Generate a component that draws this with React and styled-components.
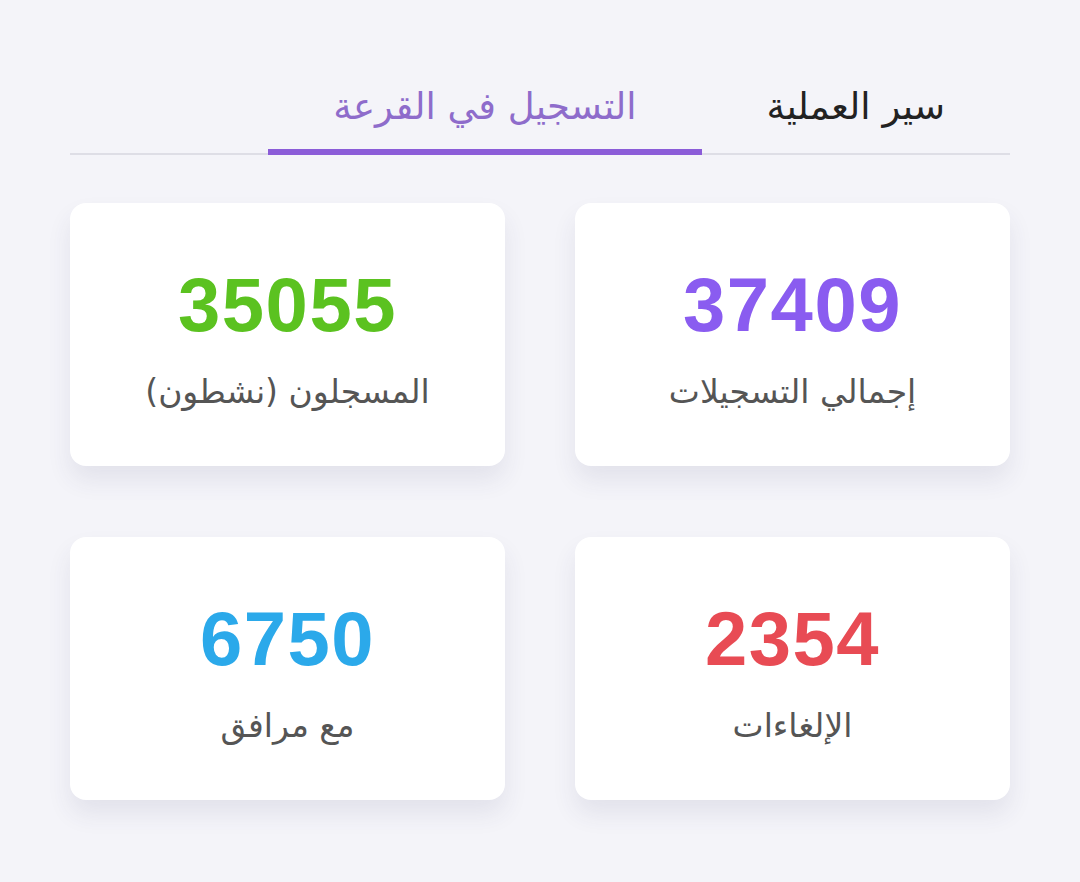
import React, { useState } from 'react';
import styled, { createGlobalStyle } from 'styled-components';

const GlobalStyle = createGlobalStyle`
  html, body {
    margin: 0;
    padding: 0;
    background: #f4f4f9;
  }
  body {
    font-family: 'DejaVu Sans', 'Noto Sans', sans-serif;
  }
`;

const stats = [
  { id: 'total', value: 37409, label: 'إجمالي التسجيلات', color: '#8a5cf0' },
  { id: 'active', value: 35055, label: 'المسجلون (نشطون)', color: '#5bc220' },
  { id: 'cancel', value: 2354, label: 'الإلغاءات', color: '#e84b54' },
  { id: 'companion', value: 6750, label: 'مع مرافق', color: '#2ba9ea' },
];

const tabs = [
  { id: 'flow', label: 'سير العملية' },
  { id: 'lottery', label: 'التسجيل في القرعة' },
];

const App = () => {
  const [activeTab, setActiveTab] = useState('lottery');

  return (
    <Page dir="rtl">
      <GlobalStyle />
      <TabBar>
        {tabs.map(tab => (
          <Tab
            key={tab.id}
            active={tab.id === activeTab}
            onClick={() => setActiveTab(tab.id)}
          >
            {tab.label}
          </Tab>
        ))}
      </TabBar>

      <StatsGrid>
        {stats.map(stat => (
          <StatCard key={stat.id}>
            <StatValue color={stat.color}>{stat.value}</StatValue>
            <StatLabel>{stat.label}</StatLabel>
          </StatCard>
        ))}
      </StatsGrid>
    </Page>
  );
};

const Page = styled.div`
  min-height: 882px;
  box-sizing: border-box;
  padding: 71px 70px 40px;
  background: #f4f4f9;
`;

const TabBar = styled.div`
  display: flex;
  border-bottom: 2px solid #dedee6;
`;

const Tab = styled.button`
  background: none;
  border: none;
  padding: 6px 65px 12px;
  margin-bottom: -2px;
  font-family: 'DejaVu Sans', sans-serif;
  font-size: 37px;
  line-height: 60px;
  color: ${props => props.active ? '#8e6ccb' : '#222'};
  border-bottom: 6px solid ${props => props.active ? '#8b5cd8' : 'transparent'};
  cursor: pointer;
`;

const StatsGrid = styled.div`
  display: grid;
  grid-template-columns: repeat(2, 1fr);
  column-gap: 70px;
  row-gap: 71px;
  margin-top: 48px;
`;

const StatCard = styled.div`
  background: #fff;
  border-radius: 16px;
  height: 263px;
  display: flex;
  flex-direction: column;
  align-items: center;
  padding-top: 60px;
  box-sizing: border-box;
  box-shadow: 0 14px 24px rgba(60, 60, 100, 0.09);
`;

const StatValue = styled.div`
  color: ${props => props.color};
  font-family: 'Liberation Sans', Arial, sans-serif;
  font-weight: 700;
  font-size: 76px;
  letter-spacing: 1.5px;
  line-height: 84px;
  direction: ltr;
`;

const StatLabel = styled.div`
  margin-top: 23px;
  color: #555;
  font-size: 33px;
  line-height: 44px;
`;

export default App;
